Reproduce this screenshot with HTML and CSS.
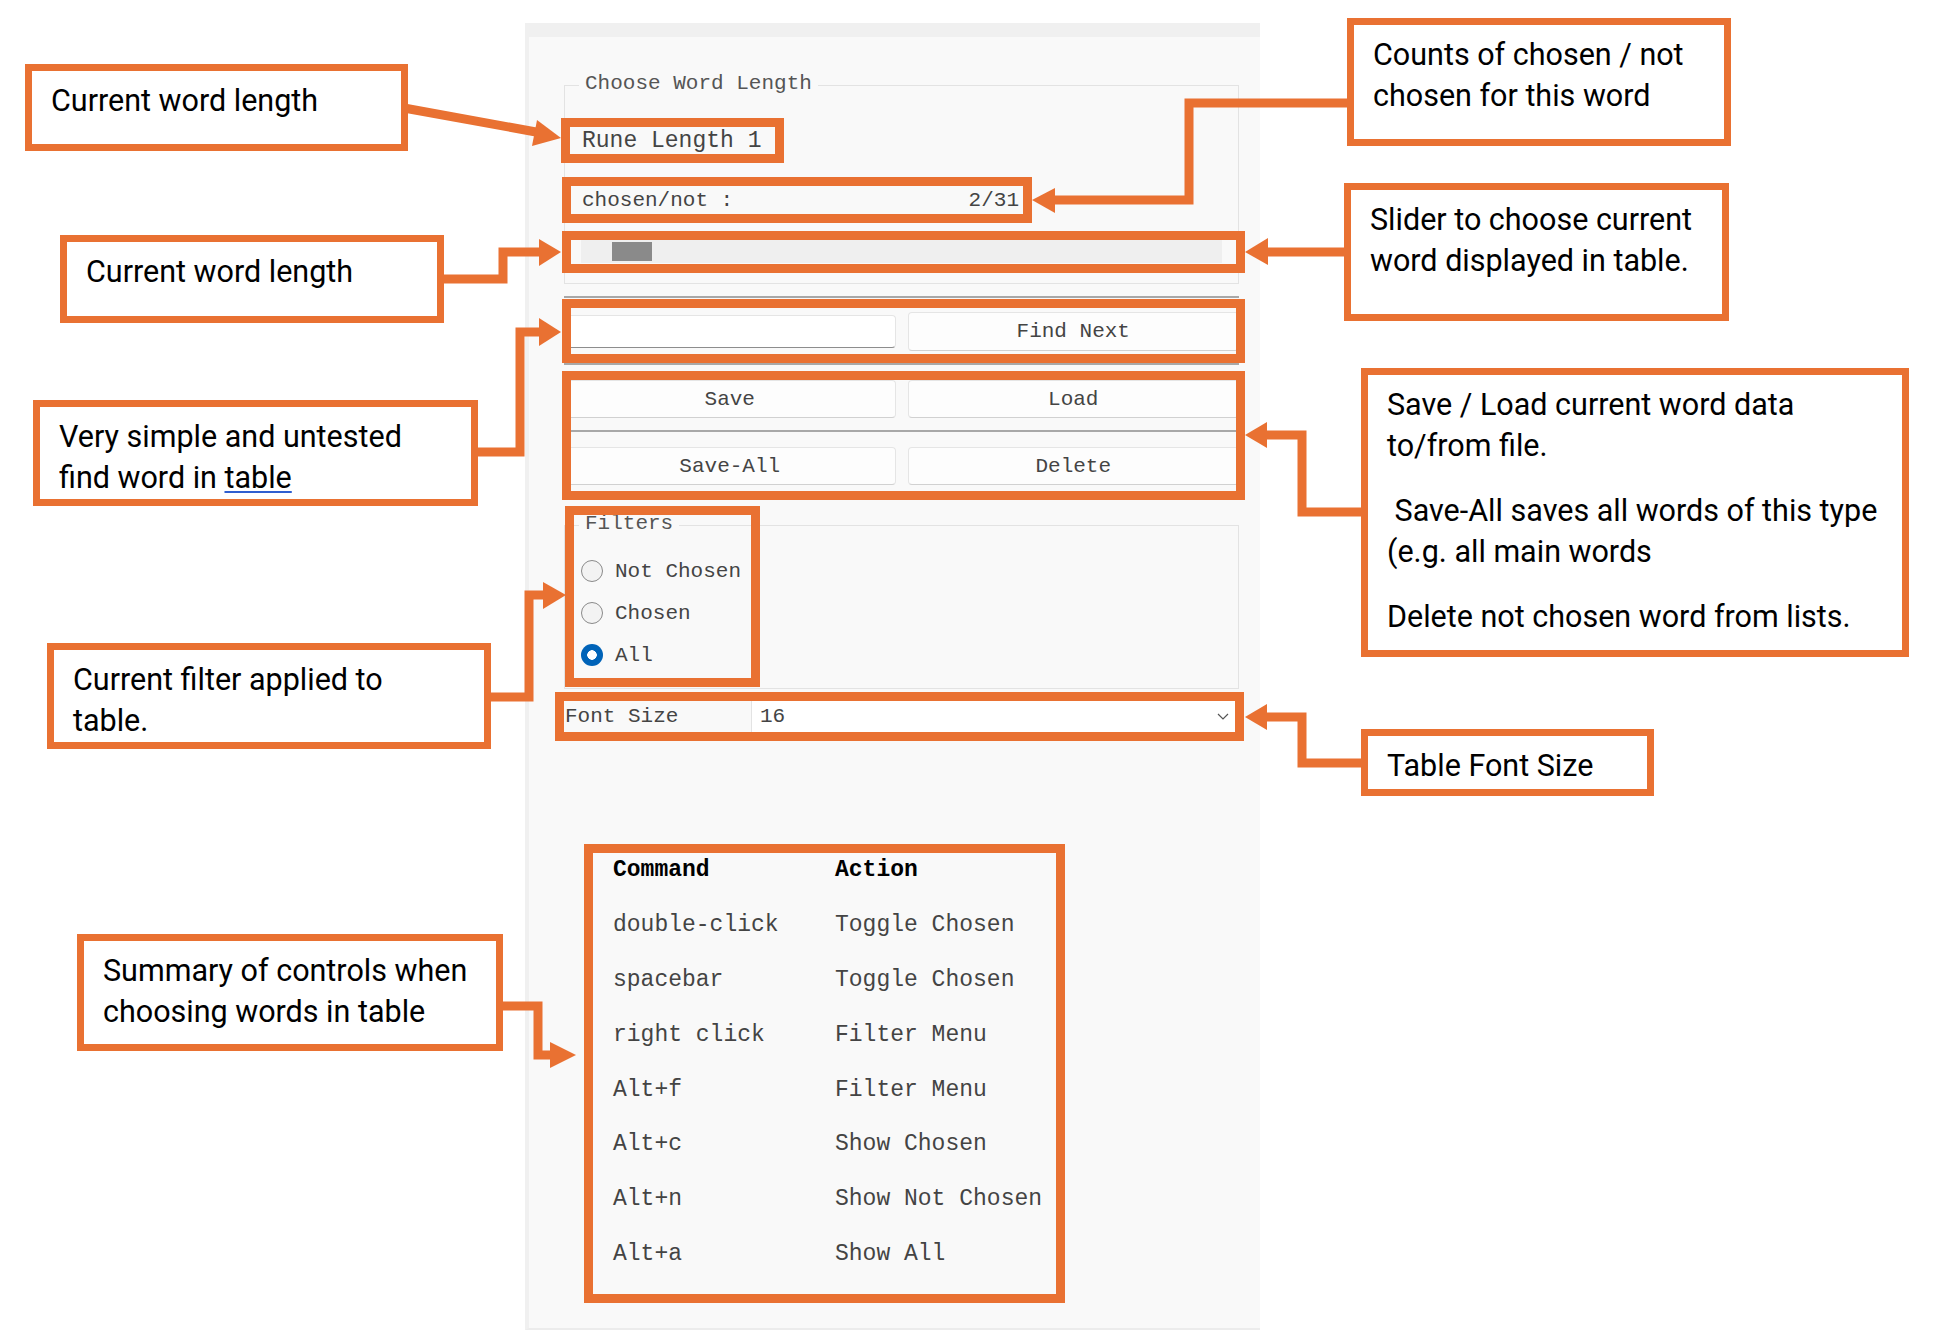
FILE: index.html
```html
<!DOCTYPE html>
<html>
<head>
<meta charset="utf-8">
<title>Word chooser controls</title>
<link rel="stylesheet" href="styles.css">
</head>
<body>
<div class="canvas">

<div class="panel">
	<div class="group">
		<span class="group_title">Choose Word Length</span>
		<div class="rune mark mark_rune">Rune Length 1</div>
		<div class="count mark mark_count"><span>chosen/not :</span><span>2/31</span></div>
		<div class="slider mark mark_slider"><div class="thumb"></div></div>
	</div>

	<div class="sep sep_top"></div>
	<div class="find mark mark_find">
		<div class="entry"></div>
		<div class="btn">Find Next</div>
	</div>
	<div class="sep"></div>

	<div class="files mark mark_files">
		<div class="btn_row"><div class="btn">Save</div><div class="btn">Load</div></div>
		<div class="sep"></div>
		<div class="btn_row"><div class="btn">Save-All</div><div class="btn">Delete</div></div>
	</div>

	<div class="group filters mark mark_filters">
		<span class="group_title">Filters</span>
		<div class="radio"><i></i>Not Chosen</div>
		<div class="radio"><i></i>Chosen</div>
		<div class="radio on"><i></i>All</div>
	</div>

	<div class="fontsize mark mark_font">
		<div class="fs_label">Font Size</div>
		<div class="fs_select">
			<span>16</span>
			<svg class="chev" width="12" height="7" viewBox="0 0 12 7"><path d="M1 1 L6 6 L11 1" fill="none" stroke="#555" stroke-width="1.2"/></svg>
		</div>
	</div>

	<div class="keys mark mark_keys">
		<table>
			<tr><th>Command</th><th>Action</th></tr>
			<tr><td>double-click</td><td>Toggle Chosen</td></tr>
			<tr><td>spacebar</td><td>Toggle Chosen</td></tr>
			<tr><td>right click</td><td>Filter Menu</td></tr>
			<tr><td>Alt+f</td><td>Filter Menu</td></tr>
			<tr><td>Alt+c</td><td>Show Chosen</td></tr>
			<tr><td>Alt+n</td><td>Show Not Chosen</td></tr>
			<tr><td>Alt+a</td><td>Show All</td></tr>
		</table>
	</div>
</div>

<svg class="arrows" width="1945" height="1342" viewBox="0 0 1945 1342">
	<g fill="none" stroke="#e97132" stroke-width="9">
		<path d="M404 108 L536 132"/>
		<path d="M440 279 H503 V252 H541"/>
		<path d="M474 452 H520 V332 H541"/>
		<path d="M487 697 H529 V595 H545"/>
		<path d="M499 1006 H538 V1055 H552"/>
		<path d="M1351 103 H1189 V200 H1053"/>
		<path d="M1348 252 H1266"/>
		<path d="M1365 512 H1302 V435 H1265"/>
		<path d="M1365 763 H1302 V717 H1265"/>
	</g>
	<g fill="#e97132">
		<polygon points="561,138 537,120 532,146"/>
		<polygon points="561,252 539,239 539,266"/>
		<polygon points="561,332 539,318 539,346"/>
		<polygon points="566,595 543,582 543,609"/>
		<polygon points="576,1055 550,1042 550,1068"/>
		<polygon points="1032,200 1055,188 1055,213"/>
		<polygon points="1245,252 1268,238 1268,265"/>
		<polygon points="1245,435 1267,422 1267,448"/>
		<polygon points="1245,717 1267,704 1267,730"/>
	</g>
</svg>

<div class="note n1">Current word length</div>
<div class="note n2">Current word length</div>
<div class="note n3">Very simple and untested<br>find word in <span class="link">table</span></div>
<div class="note n4">Current filter applied to<br>table.</div>
<div class="note n5">Summary of controls when<br>choosing words in table</div>
<div class="note n6">Counts of chosen / not<br>chosen for this word</div>
<div class="note n7">Slider to choose current<br>word displayed in table.</div>
<div class="note n8">
	<p>Save / Load current word data<br>to/from file.</p>
	<p>&nbsp;Save-All saves all words of this type<br>(e.g. all main words</p>
	<p>Delete not chosen word from lists.</p>
</div>
<div class="note n9">Table Font Size</div>

</div>
</body>
</html>
```

FILE: styles.css
```css
*,*::before,*::after{margin:0;padding:0;box-sizing:border-box;}
body{background:#fff;}
.canvas{position:relative;width:1945px;height:1342px;padding-top:23px;overflow:hidden;font-family:"Liberation Mono",monospace;color:#444;}

/* app panel */
.panel{margin-left:525px;width:735px;height:1307px;background:#f9f9f9;border-top:14px solid #f0f0f0;border-left:4px solid #f0f0f0;border-bottom:2px solid #ececec;padding:48px 21px 0 35px;font-size:21px;}

.group{position:relative;border:1px solid #e3e3e3;padding:41px 0 20px;}
.group_title{position:absolute;top:-14px;left:14px;padding:0 6px;line-height:24px;background:#f9f9f9;color:#555;}

.rune{height:28px;line-height:28px;padding-left:17px;font-size:23px;}
.count{display:flex;justify-content:space-between;width:458px;height:29px;line-height:29px;margin-top:31px;padding:0 4px 0 17px;}
.slider{display:flex;align-items:center;width:641px;height:23px;margin:25px 0 0 16px;padding-left:31px;background:#efefef;}
.thumb{width:40px;height:19px;background:#8a8a8a;}

.sep{height:2px;background:#a8a8a8;margin-top:12px;}

.find{display:grid;grid-template-columns:1fr 1fr;column-gap:12px;align-items:center;height:39px;margin-top:14px;}
.entry{height:33px;background:#fff;border:1px solid #e5e5e5;border-bottom-color:#8d8d8d;border-radius:4px;}
.btn{display:flex;align-items:center;justify-content:center;height:38px;background:#fdfdfd;border:1px solid #e5e5e5;border-bottom-color:#d1d1d1;border-radius:4px;}
.find .btn{height:39px;}

.files{margin-top:15px;}
.btn_row{display:grid;grid-template-columns:1fr 1fr;column-gap:12px;}
.files .sep{margin:12px 0 15px;}

.filters{margin-top:40px;padding:24px 0 12px 16px;}
.radio{display:flex;align-items:center;gap:12px;height:42px;}
.radio i{width:22px;height:22px;border-radius:50%;border:1px solid #8a8a8a;background:#f3f3f3;}
.radio.on i{border:none;background:radial-gradient(circle,#fff 0 4.5px,#0063b8 5px);}

.fontsize{display:flex;height:31px;margin-top:12px;}
.fs_label{width:188px;padding-left:1px;line-height:31px;border-right:1px solid #e3e3e3;}
.fs_select{flex:1;display:flex;align-items:center;justify-content:space-between;background:#fff;padding:0 10px 0 8px;}

.keys{margin:111px 0 0 49px;}
.keys table{border-collapse:collapse;font-size:23px;}
.keys th,.keys td{height:54.8px;padding:0;text-align:left;white-space:pre;}
.keys th{color:#000;font-weight:bold;}
.keys th:first-child,.keys td:first-child{width:222px;}

/* orange highlight over a control */
.mark{position:relative;}
.mark::after{content:"";position:absolute;border:9px solid #e97132;z-index:2;}
.mark_rune::after{left:-4px;top:-9px;width:223px;height:45px;}
.mark_count::after{left:-3px;top:-9px;width:470px;height:46px;}
.mark_slider::after{left:-19px;top:-9px;width:683px;height:42px;}
.mark_find::after{left:-2px;top:-13px;width:683px;height:64px;}
.mark_files::after{left:-2px;top:-9px;width:683px;height:129px;}
.mark_filters::after{left:0;top:-20px;width:195px;height:181px;}
.mark_font::after{left:-9px;top:-9px;width:689px;height:49px;}
.mark_keys::after{left:-29px;top:1px;width:481px;height:459px;}

.arrows{position:absolute;left:0;top:0;z-index:3;}

/* callouts */
.note{position:absolute;z-index:4;background:#fff;border:7px solid #e97132;padding:9px 19px;font-family:Roboto,"Liberation Sans",sans-serif;font-size:30.5px;line-height:41px;color:#000;white-space:nowrap;}
.note p+p{margin-top:24px;}
.link{text-decoration:underline;text-decoration-color:#2f5fd0;text-decoration-thickness:2px;text-underline-offset:3px;}
.n1{left:25px;top:64px;width:383px;height:87px;}
.n2{left:60px;top:235px;width:384px;height:88px;}
.n3{left:33px;top:400px;width:445px;height:106px;}
.n4{left:47px;top:643px;width:444px;height:106px;}
.n5{left:77px;top:934px;width:426px;height:117px;}
.n6{left:1347px;top:18px;width:384px;height:128px;}
.n7{left:1344px;top:183px;width:385px;height:138px;}
.n8{left:1361px;top:368px;width:548px;height:289px;}
.n9{left:1361px;top:729px;width:293px;height:67px;}
```
